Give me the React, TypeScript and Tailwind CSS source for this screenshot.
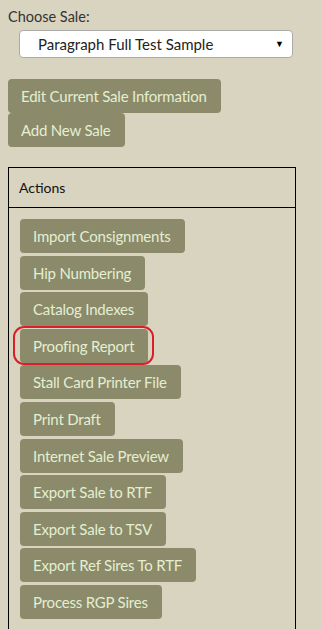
import React from "react";

const actions = [
  "Import Consignments",
  "Hip Numbering",
  "Catalog Indexes",
  "Proofing Report",
  "Stall Card Printer File",
  "Print Draft",
  "Internet Sale Preview",
  "Export Sale to RTF",
  "Export Sale to TSV",
  "Export Ref Sires To RTF",
  "Process RGP Sires",
];

function Btn({ label }: { label: string }) {
  return (
    <button className="h-[34px] rounded-[4px] bg-[#8b8a6b] pl-[13px] pr-[14px] text-left text-[15px] leading-[20px] text-[#e4efd0] tracking-[-0.2px]">
      {label}
    </button>
  );
}

export default function App() {
  return (
    <div className="min-h-[629px] h-[629px] overflow-hidden bg-[#d9d4c0] pl-[8px] pt-[7px] font-['Lato','Open_Sans',sans-serif] text-[#222]">
      <div className="text-[14.5px] leading-[19px] text-[#333]">Choose Sale:</div>
      <div className="ml-[11px] mt-[4px] flex h-[28px] w-[274px] items-center justify-between rounded-[4px] border border-[#aaa] bg-white pl-[18px] pr-[8px] text-[15px] text-[#222]">
        <span>Paragraph Full Test Sample</span>
        <span className="text-[9px] text-black">▼</span>
      </div>
      <div className="mt-[21px] flex flex-col items-start">
        <Btn label="Edit Current Sale Information" />
        <Btn label="Add New Sale" />
      </div>
      <div className="mt-[20px] w-[288px] border border-black border-b-0 h-[470px]">
        <div className="flex h-[40px] items-center border-b border-black pl-[10px] text-[14px] text-[#111]">
          Actions
        </div>
        <div className="flex flex-col items-start gap-[2.6px] pl-[11px] pt-[11px]">
          {actions.map((a) =>
            a === "Proofing Report" ? (
              <div key={a} className="relative">
                <Btn label={a} />
                <div className="pointer-events-none absolute left-[-7px] top-[-3px] h-[39px] w-[141px] rounded-[11px] border-[2.5px] border-[#d9202a]" />
              </div>
            ) : (
              <Btn key={a} label={a} />
            )
          )}
        </div>
      </div>
    </div>
  );
}
